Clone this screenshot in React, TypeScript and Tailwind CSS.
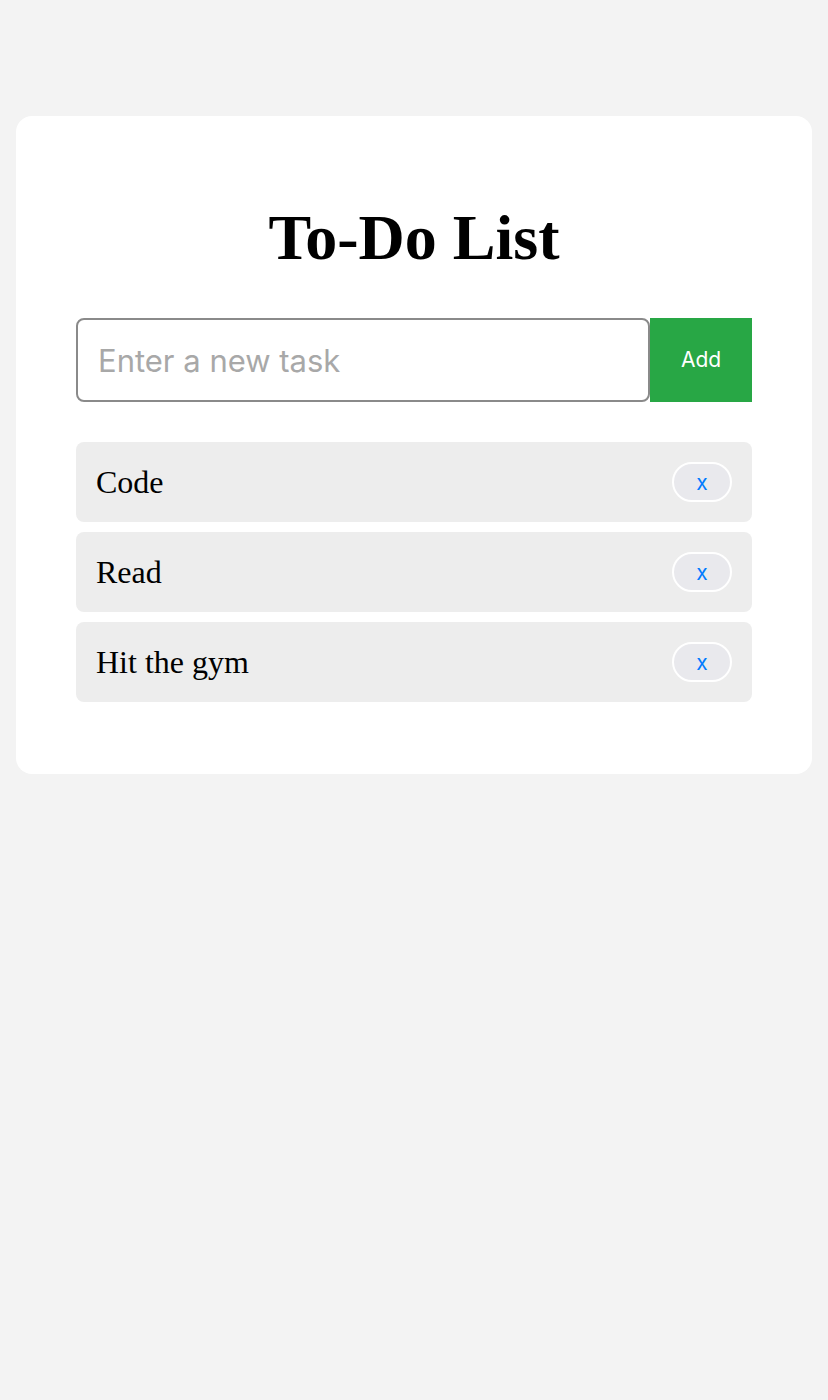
import { useState } from "react";

const initialTasks = ["Code", "Read", "Hit the gym"];

export default function App() {
	const [tasks, setTasks] = useState<string[]>(initialTasks);
	const [value, setValue] = useState("");

	const addTask = () => {
		if (!value.trim()) return;
		setTasks([...tasks, value.trim()]);
		setValue("");
	};

	return (
		<div className="min-h-[1400px] w-full bg-[#f3f3f3] pt-[116px] px-4">
			<div className="bg-white rounded-2xl px-[60px] pt-[86px] pb-[72px]">
				<h1 className="text-center font-['Liberation_Serif',serif] font-bold text-[64px] leading-[72px] text-black mb-[44px]">
					To-Do List
				</h1>
				<div className="flex mb-10">
					<input
						className="flex-1 h-[84px] border-2 border-[#8a8a8a] rounded-lg px-5 font-['Inter',sans-serif] text-[31px] text-black placeholder:text-[#a8a8a8] outline-none"
						placeholder="Enter a new task"
						value={value}
						onChange={(e) => setValue(e.target.value)}
					/>
					<button
						className="w-[102px] h-[84px] bg-[#28a745] text-white font-['Inter',sans-serif] text-[21px]"
						onClick={addTask}
					>
						Add
					</button>
				</div>
				<ul className="flex flex-col gap-[10px]">
					{tasks.map((task, i) => (
						<li
							key={i}
							className="h-20 bg-[#ededed] rounded-lg flex items-center justify-between px-5"
						>
							<span className="font-['Liberation_Serif',serif] text-[32px] text-black">{task}</span>
							<button
								className="w-[60px] h-10 rounded-full border-2 border-white bg-[#e9e9ed] text-[#007bff] font-['Inter',sans-serif] text-[21px] leading-none"
								onClick={() => setTasks(tasks.filter((_, j) => j !== i))}
							>
								x
							</button>
						</li>
					))}
				</ul>
			</div>
		</div>
	);
}
